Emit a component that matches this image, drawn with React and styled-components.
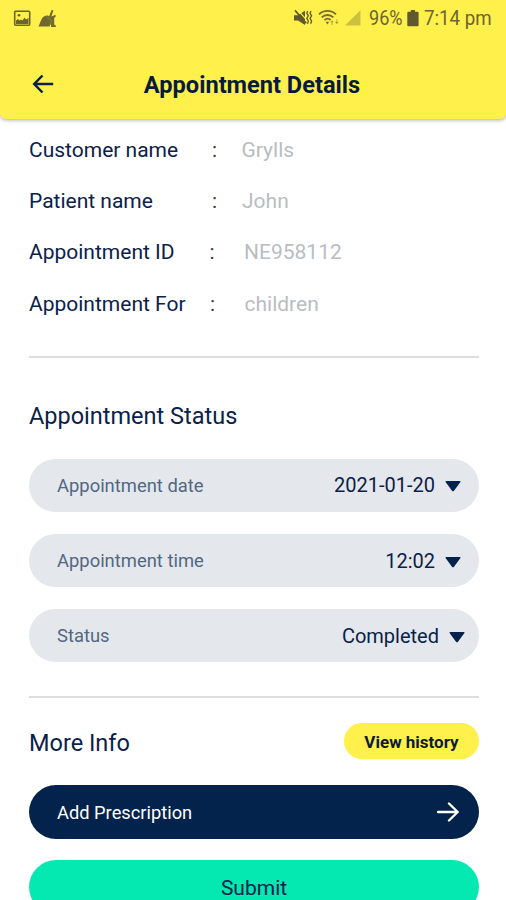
import React from "react";
import styled, { createGlobalStyle } from "styled-components";

const details = [
	{ label: "Customer name", value: "Grylls", colon: 212, start: 241.5 },
	{ label: "Patient name", value: "John", colon: 212, start: 242 },
	{ label: "Appointment ID", value: "NE958112", colon: 209.5, start: 244 },
	{ label: "Appointment For", value: "children", colon: 210, start: 244.5 },
];

const fields = [
	{ label: "Appointment date", value: "2021-01-20", end: 18 },
	{ label: "Appointment time", value: "12:02", end: 18 },
	{ label: "Status", value: "Completed", end: 14 },
];

const PictureIcon = () => (
	<svg width="18" height="17" viewBox="0 0 18 17">
		<rect x="1.7" y="1.2" width="15" height="14" rx="1" fill="none" stroke="#6b642a" strokeWidth="1.6" />
		<circle cx="6" cy="5.2" r="1.3" fill="#6b642a" />
		<path d="M3 14V10.5L5 9L6.5 10.5L8 9.5L9.5 10.5L11.5 7.5L13 9.5L15.5 8V14Z" fill="#6b642a" />
	</svg>
);

const CleanerIcon = () => (
	<svg width="19" height="19" viewBox="0 0 19 19">
		<path d="M.4 17.4C1.6 15.6 2 13 3.6 10.2C5 7.6 7.4 6.2 10 6.6L11 7.6L13.6 1L15.4 1.6L13.4 7.4L17.6 5.8V7.8L16.2 9V15.6L17.8 16.6V18H13V14.5L11.5 17.6Z" fill="#70692e" />
		<path d="M8.4 7.8L13.2 10.8L12.6 16" fill="none" stroke="#968d38" strokeWidth=".6" />
	</svg>
);

const MutedIcon = () => (
	<svg width="20" height="18" viewBox="0 0 20 18" fill="none" stroke="#5f592b">
		<path d="M1 6.2H5L12 1.8V16L5 11.6H1Z" fill="#5f592b" stroke="none" />
		<path d="M4.6 .8L13.6 10.8" stroke="#fff04c" strokeWidth="1.2" />
		<path d="M2 1.4L13.2 14.2" strokeWidth="1.7" />
		<path d="M14.6 2L13.8 4.2L15.4 6.8L13.8 9.4L15.4 12L14.4 14.8" strokeWidth="1.3" />
		<path d="M18 2L17 4.2L18.6 6.8L17 9.4L18.6 12L17.6 14.8" strokeWidth="1.3" />
	</svg>
);

const WifiIcon = () => (
	<svg width="22" height="18" viewBox="0 0 22 18" fill="none" stroke="#756d31">
		<path d="M1 5.3C5.7.8 13.2.8 18 5.3M3.7 8.3C7 5.2 12 5.2 15.3 8.3M6.5 11C8.5 9.3 10.8 9.3 12.6 11" strokeWidth="1.8" />
		<path d="M9.4 15.4L7.7 12.7H11.2Z" fill="#756d31" stroke="none" />
		<path d="M12.3 13.3L14 11.5L15.7 13.3ZM17.2 13L18.8 14.9L20.6 13Z" fill="#9b9235" stroke="none" />
		<path d="M14 13V16M18.9 10.5V13" stroke="#aba13a" strokeWidth=".9" />
	</svg>
);

const SignalIcon = () => (
	<svg width="16" height="16" viewBox="0 0 16 16">
		<path d="M0 15.6L15.5 .2V15.6Z" fill="#cdbf40" />
	</svg>
);

const BatteryIcon = () => (
	<svg width="12" height="17" viewBox="0 0 12 17">
		<path d="M3.8 0H8V1.8H10.5Q11.6 1.8 11.6 3V15.2Q11.6 16.3 10.5 16.3H1.4Q.3 16.3 .3 15.2V3Q.3 1.8 1.4 1.8H3.8Z" fill="#5f592b" />
	</svg>
);

const BackIcon = () => (
	<svg width="22" height="20" viewBox="0 0 22 20" fill="none" stroke="#08204a" strokeWidth="2.5">
		<path d="M21.2 10H2.5M10.5 1.5L2.2 10L10.5 18.5" />
	</svg>
);

const ForwardIcon = () => (
	<svg width="23" height="20" viewBox="0 0 23 20" fill="none" stroke="#fff" strokeWidth="2.4">
		<path d="M1 10H20.5M12 1.5L20.7 10L12 18.5" strokeLinejoin="round" strokeLinecap="round" />
	</svg>
);

const Caret = () => (
	<svg width="16" height="11" viewBox="0 0 16 11">
		<path d="M.4 .8Q.5 0 1.4 0H14.6Q15.5 0 15.6 .8L9 9.8Q8 10.8 7 9.8Z" fill="#03224c" />
	</svg>
);

const App = () => {
	return (
		<Screen>
			<GlobalStyle />
			<Header>
				<StatusBar>
					<PictureIcon />
					<CleanerIcon />
					<StatusRight>
						<MutedIcon />
						<WifiIcon />
						<SignalIcon />
						<StatusText $width={38} $scale={0.86} $left={8}>96%</StatusText>
						<BatteryIcon />
						<StatusText $width={68} $scale={0.89} $left={5}>7:14 pm</StatusText>
					</StatusRight>
				</StatusBar>
				<TitleBar>
					<BackIcon />
					<Title>Appointment Details</Title>
				</TitleBar>
			</Header>
			<Content>
				<DetailList>
					{details.map((item) => (
						<DetailRow key={item.label} $colon={item.colon} $start={item.start}>
							<span>{item.label}</span>
							<Colon>:</Colon>
							<DetailValue>{item.value}</DetailValue>
						</DetailRow>
					))}
				</DetailList>
				<Divider />
				<StatusHeading>Appointment Status</StatusHeading>
				<FieldList>
					{fields.map((field) => (
						<Field key={field.label} $end={field.end}>
							<FieldLabel>{field.label}</FieldLabel>
							<FieldValue>{field.value}</FieldValue>
							<Caret />
						</Field>
					))}
				</FieldList>
				<Divider />
				<InfoRow>
					<InfoHeading>More Info</InfoHeading>
					<HistoryButton>View history</HistoryButton>
				</InfoRow>
				<PrescriptionButton>
					<span>Add Prescription</span>
					<ForwardIcon />
				</PrescriptionButton>
				<SubmitButton>Submit</SubmitButton>
			</Content>
		</Screen>
	);
};

export default App;

const GlobalStyle = createGlobalStyle`
	* {
		box-sizing: border-box;
	}

	body {
		margin: 0;
		overflow: hidden;
		font-family: Roboto, sans-serif;
	}

	svg {
		display: block;
		flex-shrink: 0;
	}

	button {
		border: 0;
		font-family: inherit;
	}
`;

const Screen = styled.div`
	width: 506px;
	height: 900px;
	overflow: hidden;
	background: #fff;
	color: #0a2149;
`;

const Header = styled.header`
	height: 118.5px;
	background: #fff04c;
	border-radius: 0 0 6px 6px;
	box-shadow: 0 1px 4px rgba(0, 0, 0, 0.35);
`;

const StatusBar = styled.div`
	display: flex;
	align-items: center;
	height: 36px;
	padding: 0 14px 0 13px;
	gap: 7px;
`;

const StatusRight = styled.div`
	display: flex;
	align-items: center;
	margin-left: auto;

	svg + svg {
		margin-left: 5px;
	}
`;

const StatusText = styled.span`
	width: ${(p) => p.$width}px;
	margin-left: ${(p) => p.$left}px;
	font-size: 21px;
	line-height: 24px;
	white-space: nowrap;
	color: #6b6430;
	transform: scaleX(${(p) => p.$scale});
	transform-origin: left center;
`;

const TitleBar = styled.div`
	display: flex;
	align-items: center;
	height: 82px;
	padding: 14px 32px 0;
`;

const Title = styled.h1`
	flex: 1;
	margin: 0 24px 0 0;
	padding-top: 1px;
	text-align: center;
	font-size: 23.6px;
	font-weight: 700;
	line-height: 28px;
	color: #071c3c;
`;

const Content = styled.main`
	padding: 5.5px 27px 0 29px;
`;

const DetailList = styled.div`
	margin-bottom: 27px;
`;

const DetailRow = styled.div`
	display: grid;
	grid-template-columns:
		${(p) => p.$colon - 29}px ${(p) => p.$start - p.$colon}px
		1fr;
	align-items: center;
	height: 51.3px;
	font-size: 21px;
	white-space: nowrap;
`;

const Colon = styled.span`
	color: #343f4b;
`;

const DetailValue = styled.span`
	color: #b8bdc2;
`;

const Divider = styled.hr`
	height: 2px;
	margin: 0;
	border: 0;
	background: #dcdee0;
`;

const Heading = styled.h2`
	margin: 0;
	font-size: 23.5px;
	font-weight: 400;
	line-height: 28px;
`;

const StatusHeading = styled(Heading)`
	margin: 43.5px 0 29px;
`;

const FieldList = styled.div`
	display: flex;
	flex-direction: column;
	gap: 21.6px;
	margin-bottom: 34px;
`;

const Field = styled.div`
	display: flex;
	align-items: center;
	height: 53.5px;
	padding: 0 ${(p) => p.$end}px 0 28px;
	border-radius: 27px;
	background: #e4e8ec;

	svg {
		margin: 3px 0 0 10px;
	}
`;

const FieldLabel = styled.span`
	flex: 1;
	font-size: 18.4px;
	color: #526783;
`;

const FieldValue = styled.span`
	font-size: 20px;
`;

const InfoRow = styled.div`
	display: flex;
	align-items: center;
	justify-content: space-between;
	height: 36px;
	margin: 25px 0 26px;
`;

const InfoHeading = styled(Heading)`
	padding-top: 3px;
`;

const HistoryButton = styled.button`
	width: 135px;
	height: 36px;
	padding: 2px 0 0;
	border-radius: 18px;
	background: #fff04c;
	color: #0b1c32;
	font-size: 17px;
	font-weight: 700;
`;

const PrescriptionButton = styled.button`
	display: flex;
	align-items: center;
	justify-content: space-between;
	width: 100%;
	height: 54px;
	padding: 0 19px 0 28px;
	border-radius: 27px;
	background: #03224c;
	color: #fff;
	font-size: 18.3px;
`;

const SubmitButton = styled.button`
	width: 100%;
	height: 54px;
	margin-top: 21px;
	padding: 1px 0 0;
	border-radius: 27px;
	background: #03e9b1;
	color: #0a2149;
	font-size: 21px;
`;
